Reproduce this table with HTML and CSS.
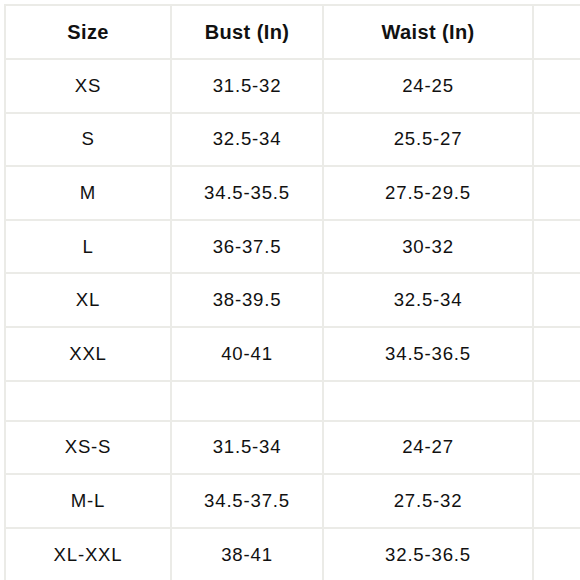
FILE: index.html
```html
<!DOCTYPE html>
<html>
<head>
<meta charset="utf-8">
<link rel="stylesheet" href="styles.css">
</head>
<body>
<table class="size-table">
  <colgroup>
    <col class="c1"><col class="c2"><col class="c3"><col class="c4">
  </colgroup>
  <thead>
    <tr><th>Size</th><th>Bust (In)</th><th>Waist (In)</th><th></th></tr>
  </thead>
  <tbody>
    <tr><td>XS</td><td>31.5-32</td><td>24-25</td><td></td></tr>
    <tr><td>S</td><td>32.5-34</td><td>25.5-27</td><td></td></tr>
    <tr><td>M</td><td>34.5-35.5</td><td>27.5-29.5</td><td></td></tr>
    <tr><td>L</td><td>36-37.5</td><td>30-32</td><td></td></tr>
    <tr><td>XL</td><td>38-39.5</td><td>32.5-34</td><td></td></tr>
    <tr><td>XXL</td><td>40-41</td><td>34.5-36.5</td><td></td></tr>
    <tr class="spacer"><td></td><td></td><td></td><td></td></tr>
    <tr><td>XS-S</td><td>31.5-34</td><td>24-27</td><td></td></tr>
    <tr><td>M-L</td><td>34.5-37.5</td><td>27.5-32</td><td></td></tr>
    <tr><td>XL-XXL</td><td>38-41</td><td>32.5-36.5</td><td></td></tr>
  </tbody>
</table>
</body>
</html>
```
FILE: styles.css
```css
html, body {
  margin: 0;
  padding: 0;
  background: #ffffff;
  overflow: hidden;
}
body {
  width: 580px;
  height: 580px;
  padding: 4px 0 0 4px;
  box-sizing: border-box;
}
.size-table {
  border-collapse: collapse;
  table-layout: fixed;
  width: 720px;
  font-family: "Liberation Sans", Arial, sans-serif;
  font-size: 18.6px;
  letter-spacing: 0.8px;
  color: #111111;
}
.c1 { width: 166px; }
.c2 { width: 152px; }
.c3 { width: 210px; }
.c4 { width: 192px; }
.size-table th,
.size-table td {
  border: 2px solid #ebebe7;
  text-align: center;
  vertical-align: middle;
  height: 53.6px;
  padding: 0;
  box-sizing: border-box;
}
.size-table th {
  font-weight: bold;
  font-size: 20px;
  letter-spacing: 0.4px;
  height: 54px;
}
.size-table tr.spacer td {
  height: 40px;
}
```
